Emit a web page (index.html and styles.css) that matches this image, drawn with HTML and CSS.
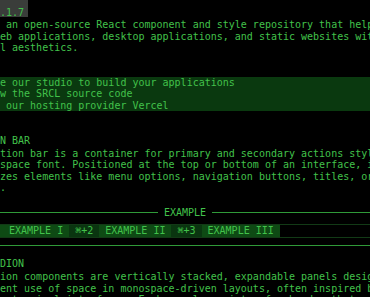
FILE: index.html
```html
<!DOCTYPE html>
<html lang="en">
<head>
  <meta charset="UTF-8" />
  <meta name="viewport" content="width=device-width, initial-scale=1.0"/>
  <title>SRCL</title>
  <link rel="stylesheet" href="styles.css">
</head>
<body>

  <!-- Title + version -->
  <div class="title-row">
    <span class="badge">.1.7</span>
  </div>

  <p class="text intro">
    <span class="line"> an open-source React component and style repository that helps you</span>
    <span class="line">eb applications, desktop applications, and static websites with terminal</span>
    <span class="line">l aesthetics.</span>
  </p>

  <!-- Action list -->
  <ul class="action-list">
    <li>e our studio to build your applications</li>
    <li>w the SRCL source code</li>
    <li> our hosting provider Vercel</li>
  </ul>

  <!-- Action bar section -->
  <h2 class="heading">N BAR</h2>
  <p class="text">
    <span class="line">tion bar is a container for primary and secondary actions styled in a</span>
    <span class="line">space font. Positioned at the top or bottom of an interface, it</span>
    <span class="line">zes elements like menu options, navigation buttons, titles, or search</span>
    <span class="line">.</span>
  </p>

  <div class="divider">
    <span class="rule"></span>
    <span class="divider-label">EXAMPLE</span>
    <span class="rule"></span>
  </div>

  <div class="action-bar">
    <div class="bar-buttons">
      <span class="btn-content">EXAMPLE I</span>
      <span class="hotkey">⌘+2</span>
      <span class="btn-content">EXAMPLE II</span>
      <span class="hotkey">⌘+3</span>
      <span class="btn-content">EXAMPLE III</span>
    </div>
  </div>

  <hr class="rule-full">

  <!-- Accordion section -->
  <h2 class="heading heading-low">DION</h2>
  <p class="text">
    <span class="line">ion components are vertically stacked, expandable panels designed for</span>
    <span class="line">ent use of space in monospace-driven layouts, often inspired by classic</span>
    <span class="line">c terminal interfaces. Each panel consists of a header that can be</span>
  </p>

</body>
</html>
```

FILE: styles.css
```css
:root {
  --bg-color: #000000;
  --text-color: #42c24b;
  --box-bg: #0a390f;
  --bar-bg: #0e4a14;
  --hotkey-bg: #0a3510;
  --line-color: #2f9a38;
  --badge-bg: #3a3d3a;
}

html, body {
  overflow: hidden;
}

body {
  margin: 0;
  padding: 0;
  width: 370px;
  height: 297px;
  background-color: var(--bg-color);
  color: var(--text-color);
  font-family: 'DejaVu Sans Mono', monospace;
  font-size: 10px;
  line-height: 11.5px;
}

.line {
  display: block;
  white-space: pre;
}

/* title row */
.title-row {
  height: 19px;
}

.badge {
  display: inline-block;
  background: var(--badge-bg);
  padding: 7px 4px 0 0;
  height: 10px;
  line-height: 11px;
}

.text {
  margin: 0;
}

.intro {
  margin-bottom: 23px;
}

/* action list box */
.action-list {
  list-style: none;
  margin: 0;
  padding: 0;
  background: var(--box-bg);
}

.action-list li {
  white-space: pre;
}

/* section headings */
.heading {
  font-size: 10px;
  font-weight: normal;
  margin: 24px 0 1px 0;
  line-height: 11.5px;
}

.heading-low {
  margin: 12px 0 2px 0;
}

/* divider with label */
.divider {
  display: flex;
  align-items: center;
  gap: 6px;
  margin-top: 13px;
  height: 11.5px;
}

.rule {
  flex: 1;
  height: 1px;
  background: var(--line-color);
}

/* action bar */
.action-bar {
  margin-top: 6px;
  border-top: 1px solid #123a16;
  border-bottom: 1px solid #123a16;
}

.bar-buttons {
  display: inline-flex;
  background: var(--bar-bg);
  padding-left: 3px;
}

.btn-content {
  padding: 0 6px;
}

.hotkey {
  padding: 0 6px;
  background: var(--hotkey-bg);
}

.rule-full {
  border: none;
  height: 1px;
  background: var(--line-color);
  margin: 7px 0 0 0;
}
```
